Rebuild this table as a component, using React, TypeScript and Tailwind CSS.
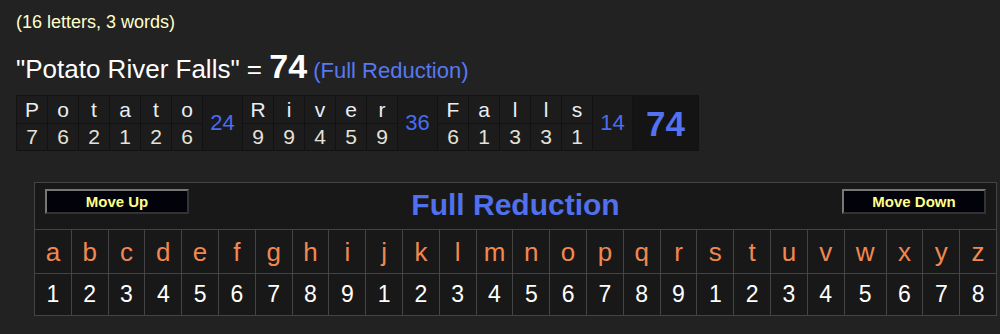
import React from "react";

const font = { fontFamily: '"Liberation Sans", Arial, sans-serif' };

type Word = { letters: string[]; values: number[]; sum: number };

const words: Word[] = [
  { letters: ["P", "o", "t", "a", "t", "o"], values: [7, 6, 2, 1, 2, 6], sum: 24 },
  { letters: ["R", "i", "v", "e", "r"], values: [9, 9, 4, 5, 9], sum: 36 },
  { letters: ["F", "a", "l", "l", "s"], values: [6, 1, 3, 3, 1], sum: 14 },
];

const alphabet = "abcdefghijklmnopqrstuvwxyz".split("");
const reduce = (i: number) => ((i % 9) + 1);

function WordTable() {
  const cells: React.ReactNode[] = [];
  let col = 1;
  words.forEach((w, wi) => {
    w.letters.forEach((l, li) => {
      cells.push(
        <div
          key={`l-${wi}-${li}`}
          className="bg-[#1c1c1c] flex items-center justify-center text-[21px] leading-none text-[#e8eef6]"
          style={{ gridColumn: col, gridRow: 1 }}
        >
          {l}
        </div>
      );
      cells.push(
        <div
          key={`v-${wi}-${li}`}
          className="bg-[#1c1c1c] flex items-center justify-center text-[21px] leading-none text-[#e6e2d8] pb-[2px]"
          style={{ gridColumn: col, gridRow: 2 }}
        >
          {w.values[li]}
        </div>
      );
      col++;
    });
    cells.push(
      <div
        key={`s-${wi}`}
        className="bg-[#1a1a1a] flex items-center justify-center text-[22px] leading-none text-[#4a6cf0]"
        style={{ gridColumn: col, gridRow: "1 / span 2" }}
      >
        {w.sum}
      </div>
    );
    col++;
  });
  cells.push(
    <div
      key="total"
      className="bg-[#141414] flex items-center justify-center text-[35px] font-bold leading-none text-[#5272f2]"
      style={{ gridColumn: col, gridRow: "1 / span 2" }}
    >
      74
    </div>
  );
  return (
    <div
      className="mt-[12px] grid w-fit bg-[#121212] p-px gap-px grid-rows-[27px_26px] grid-cols-[repeat(6,30px)_39px_repeat(5,30px)_39px_repeat(5,30px)_39px_65px]"
    >
      {cells}
    </div>
  );
}

function MoveButton({ label }: { label: string }) {
  return (
    <div className="w-[144px] h-[25px] border-2 border-t-[#777] border-l-[#777] border-r-[#333] border-b-[#333] bg-[#02020a] flex items-center justify-center text-[15px] font-bold leading-none text-[#ffff88]">
      {label}
    </div>
  );
}

function ReductionTable() {
  return (
    <div className="mt-[31px] ml-[18px] w-[963px] grid bg-[#444] p-px gap-px grid-cols-[repeat(22,minmax(0,1fr))_41px_repeat(3,minmax(0,1fr))] grid-rows-[46px_43px_41px]">
      <div className="col-span-full bg-[#181818] flex items-start justify-between px-[10px] pt-[6px]">
        <MoveButton label="Move Up" />
        <div className="mt-[1px] text-[30px] font-bold leading-none text-[#5070ee]">Full Reduction</div>
        <MoveButton label="Move Down" />
      </div>
      {alphabet.map((a) => (
        <div
          key={`a-${a}`}
          className="bg-[#181818] flex items-center justify-center text-[26px] leading-none text-[#f08850]"
        >
          {a}
        </div>
      ))}
      {alphabet.map((a, i) => (
        <div
          key={`n-${a}`}
          className="bg-[#181818] flex items-center justify-center text-[23px] leading-none text-white"
        >
          {reduce(i)}
        </div>
      ))}
    </div>
  );
}

export default function App() {
  return (
    <div className="w-[1000px] h-[334px] bg-[#222] overflow-hidden pt-[13px] pl-[16px]" style={font}>
      <div className="h-[18px] text-[18px] leading-none text-[#ffffcc]">(16 letters, 3 words)</div>
      <div className="mt-[18px] flex items-baseline text-white">
        <span className="text-[26px] leading-none">"Potato River Falls" =&nbsp;</span>
        <span className="text-[34px] font-bold leading-none">74</span>
        <span className="text-[22px] leading-none text-[#5878f4]">&nbsp;(Full Reduction)</span>
      </div>
      <WordTable />
      <ReductionTable />
    </div>
  );
}
